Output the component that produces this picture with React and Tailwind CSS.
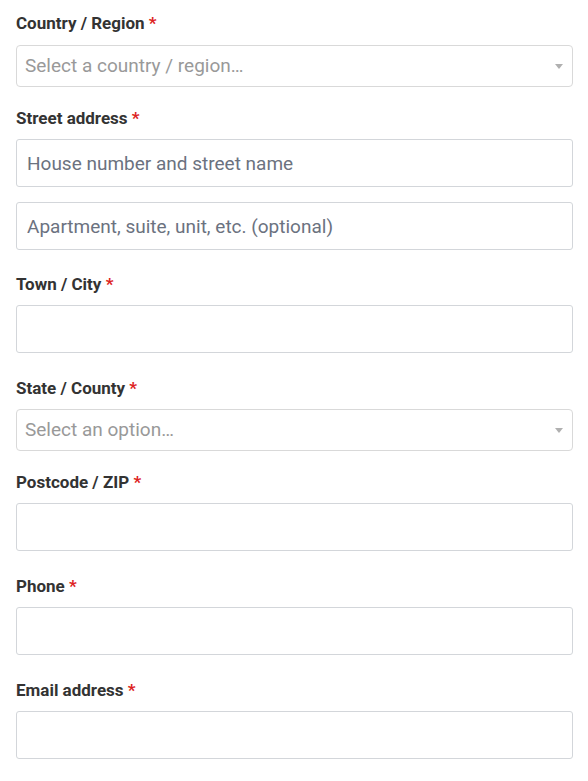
import React from "react";

const Label = ({ children, className = "" }) => (
  <label className={`block text-[17px] leading-[22px] font-bold text-[#333] ${className}`}>
    {children} <span className="text-[#dd2222]">*</span>
  </label>
);

const TextInput = ({ placeholder = "", className = "" }) => (
  <input
    type="text"
    placeholder={placeholder}
    className={`block w-full h-12 px-[10px] border border-[#d3d6da] rounded-[3px] bg-white text-[19px] text-[#333] placeholder:text-[#6b7280] outline-none ${className}`}
  />
);

const SelectBox = ({ placeholder }) => (
  <div className="flex items-center justify-between w-full h-[42px] pl-2 pr-[9px] border border-[#d9d9d9] rounded-[4px] bg-white">
    <span className="text-[19px] text-[#999]">{placeholder}</span>
    <span className="w-0 h-0 border-l-4 border-r-4 border-t-[5px] border-l-transparent border-r-transparent border-t-[#b0b0b0]" />
  </div>
);

export default function App() {
  const rows = [
    { label: "Town / City" },
    { label: "State / County", select: "Select an option…" },
    { label: "Postcode / ZIP" },
    { label: "Phone" },
    { label: "Email address" },
  ];

  return (
    <div className="bg-white min-h-[781px] pl-4 pr-[15px] pt-[12px] font-['Roboto',sans-serif]">
      <div className="mb-5">
        <Label className="mb-[11px]">Country / Region</Label>
        <SelectBox placeholder="Select a country / region…" />
      </div>

      <div className="mb-[23px]">
        <Label className="mb-[10px]">Street address</Label>
        <TextInput placeholder="House number and street name" className="mb-[15px]" />
        <TextInput placeholder="Apartment, suite, unit, etc. (optional)" />
      </div>

      {rows.map((r) => (
        <div key={r.label} className={r.select ? "mb-5" : "mb-6"}>
          <Label className="mb-[10px]">{r.label}</Label>
          {r.select ? <SelectBox placeholder={r.select} /> : <TextInput />}
        </div>
      ))}
    </div>
  );
}
